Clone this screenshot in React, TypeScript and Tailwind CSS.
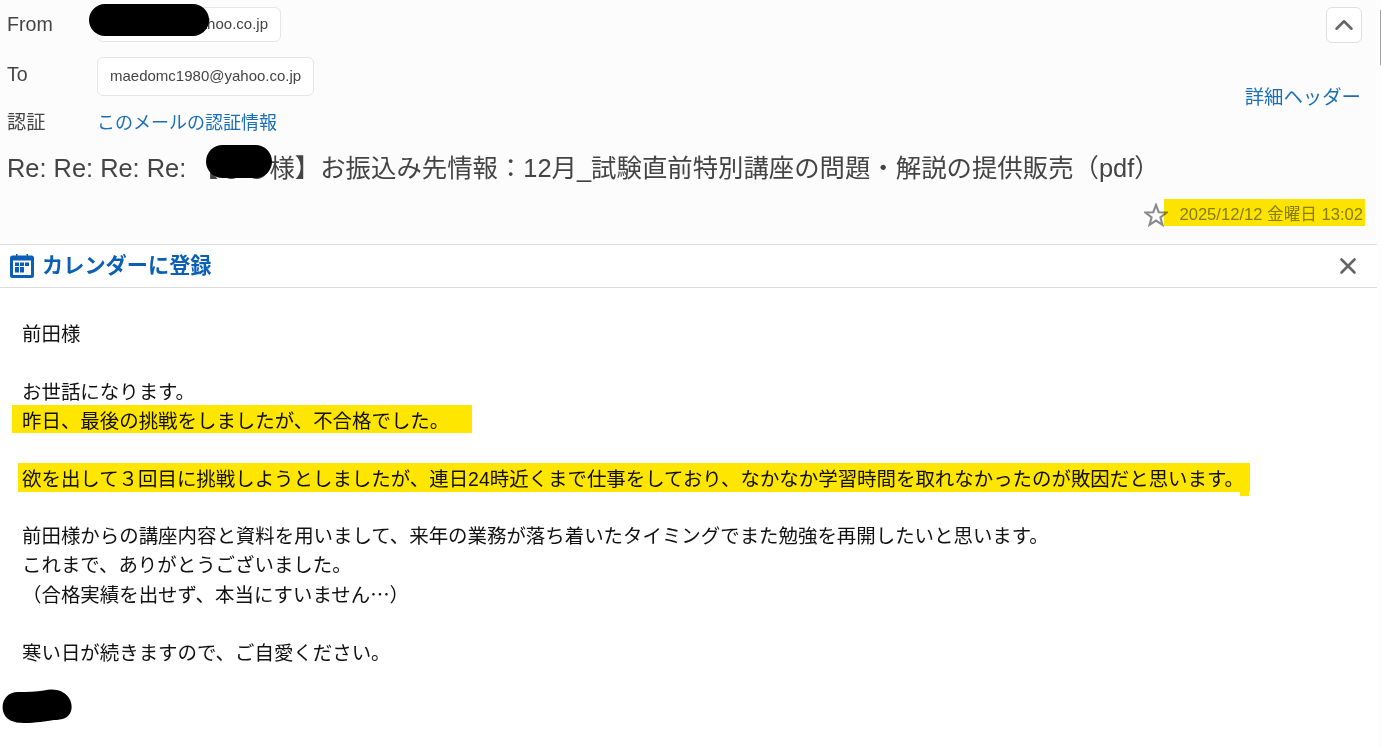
import { ChevronUp, X } from "lucide-react";

const fontStack = "font-['Liberation_Sans','Noto_Sans_CJK_JP',sans-serif]";

function AddressChip({ text, className }: { text: string; className: string }) {
  return (
    <span
      className={`flex items-center rounded-[6px] border border-[#e6e6e6] bg-white px-[12px] text-[15px] text-[#444] ${className}`}
    >
      {text}
    </span>
  );
}

function CalendarIcon() {
  return (
    <svg width="24" height="24" viewBox="0 0 24 24" className="shrink-0">
      <path d="M6 0h1.5v1.5h9V0H18v1.5h3.5A2.5 2.5 0 0 1 24 4v17.5a2.5 2.5 0 0 1-2.5 2.5h-19A2.5 2.5 0 0 1 0 21.500V4a2.500 2.500 0 0 1 2.500-2.500H6z" fill="#0b5fb5" />
      <rect x="3" y="6.500" width="18" height="14.500" fill="#fff" />
      <rect x="5" y="8.500" width="4" height="3.500" fill="#0b5fb5" />
      <rect x="10" y="8.500" width="4" height="3.500" fill="#0b5fb5" />
      <rect x="15" y="8.500" width="4" height="3.500" fill="#0b5fb5" />
      <rect x="5" y="13" width="4" height="5.500" fill="#0b5fb5" />
      <rect x="10" y="13" width="4" height="5.500" fill="#0b5fb5" />
    </svg>
  );
}

function StarIcon() {
  return (
    <svg width="24" height="24" viewBox="-1 -1 26 26" className="shrink-0">
      <polygon
        points="12,1 14.94,8.95 23.4,9.3 16.76,14.55 19.05,22.7 12,18 4.95,22.7 7.24,14.55 0.6,9.3 9.06,8.95"
        fill="none"
        stroke="#8a8a8a"
        strokeWidth="2.2"
      />
    </svg>
  );
}

export default function App() {
  return (
    <div className={`flex h-[748px] w-full overflow-hidden bg-white ${fontStack}`}>
      <div className="w-[1377px] shrink-0">
        <header className="h-[245px] border-b border-[#dcdcdc] bg-[#fcfcfc] pl-[7px] pr-[15px] text-[#444]">
          <div className="flex justify-between">
            <div className="pt-[7px]">
              <div className="relative flex h-[35px] items-center">
                <span className="w-[90px] text-[19.600px] leading-none">From</span>
                <AddressChip text="xxxxxxx@yahoo.co.jp" className="h-[35px] w-[184px] justify-end" />
                <div className="absolute left-[82px] top-[-3px] h-[32px] w-[120px] rounded-full bg-black" />
              </div>
              <div className="mt-[15px] flex h-[39px] items-center">
                <span className="mt-[-3px] w-[90px] text-[19.600px] leading-none">To</span>
                <AddressChip text="maedomc1980@yahoo.co.jp" className="h-[39px] w-[217px]" />
              </div>
              <div className="mt-[14px] flex h-[26px] items-center text-[19.200px]">
                <span className="w-[90px]">認証</span>
                <a className="text-[18px] text-[#1a6fb8]">このメールの認証情報</a>
              </div>
            </div>
            <div className="flex flex-col items-end pt-[7px]">
              <button className="flex h-[36px] w-[36px] items-center justify-center rounded-[6px] border border-[#e0e0e0] bg-white text-[#666]">
                <ChevronUp size={30} strokeWidth={2} />
              </button>
              <a className="mt-[41px] mr-[1px] text-[19.400px] leading-[26px] text-[#1a6fb8]">詳細ヘッダー</a>
            </div>
          </div>
          <div className="relative mt-[14px] flex h-[36px] items-center whitespace-pre text-[25.400px]">
            <span>Re: Re: Re: Re: 【〇〇様】お振込み先情報：12月_試験直前特別講座の問題・解説の提供販売（pdf）</span>
            <div className="absolute left-[199px] top-[-5px] h-[33px] w-[66px] rounded-full bg-black" />
          </div>
          <div className="relative mt-[16px] flex h-[26px] items-center justify-end gap-[11px] text-[16.600px] text-[#888]">
            <StarIcon />
            <span className="mr-[-1px]">2025/12/12 金曜日 13:02</span>
            <div className="pointer-events-none absolute right-[-3px] top-[-3px] h-[27px] w-[201px] bg-[#ffe600] mix-blend-multiply" />
          </div>
        </header>

        <div className="flex h-[43px] items-center justify-between border-b border-[#dcdcdc] pl-[10px] pr-[16px]">
          <div className="flex items-center gap-[8px]">
            <CalendarIcon />
            <span className="text-[21.200px] font-bold text-[#0b5fb5]">カレンダーに登録</span>
          </div>
          <X size={26} strokeWidth={2.4} className="text-[#666]" />
        </div>

        <main className="whitespace-pre pl-[22px] pt-[32px] text-[19.450px] leading-[28.900px] text-[#111]">
          <p>前田様</p>
          <p>&nbsp;</p>
          <p>お世話になります。</p>
          <p className="relative">
            昨日、最後の挑戦をしましたが、不合格でした。
            <span className="pointer-events-none absolute left-[-10px] top-[-2px] h-[28px] w-[460px] bg-[#ffe600] mix-blend-multiply" />
          </p>
          <p>&nbsp;</p>
          <p className="relative">
            欲を出して３回目に挑戦しようとしましたが、連日24時近くまで仕事をしており、なかなか学習時間を取れなかったのが敗因だと思います。
            <span className="pointer-events-none absolute left-[-4px] top-[-2px] h-[29px] w-[1232px] bg-[#ffe600] mix-blend-multiply" />
            <span className="pointer-events-none absolute left-[1218px] top-[27px] h-[4px] w-[9px] bg-[#ffe600] mix-blend-multiply" />
          </p>
          <p>&nbsp;</p>
          <p>前田様からの講座内容と資料を用いまして、来年の業務が落ち着いたタイミングでまた勉強を再開したいと思います。</p>
          <p>これまで、ありがとうございました。</p>
          <p>
            （合格実績を出せず、本当にすいません<span className="font-['Noto_Sans_CJK_JP',sans-serif]">…</span>）
          </p>
          <p>&nbsp;</p>
          <p>寒い日が続きますので、ご自愛ください。</p>
          <div className="relative h-[28.900px]">
            <svg width="70" height="34" viewBox="0 0 70 34" className="absolute left-[-20px] top-[21px]">
              <path d="M16 3C26 3 34 3 42 1.500C48 0 56 0 62 4C68 8 71 15 69 22C67 29 60 31 52 31C44 32 34 34 22 34C12 34 3 31 1 22C-1 12 5 3 16 3Z" fill="#000" />
            </svg>
          </div>
        </main>
      </div>
      <div className="flex-1 bg-[#fdfdfd] pt-[10px]">
        <div className="ml-auto h-[55px] w-[1px] bg-[#a0a0a0]" />
      </div>
    </div>
  );
}
